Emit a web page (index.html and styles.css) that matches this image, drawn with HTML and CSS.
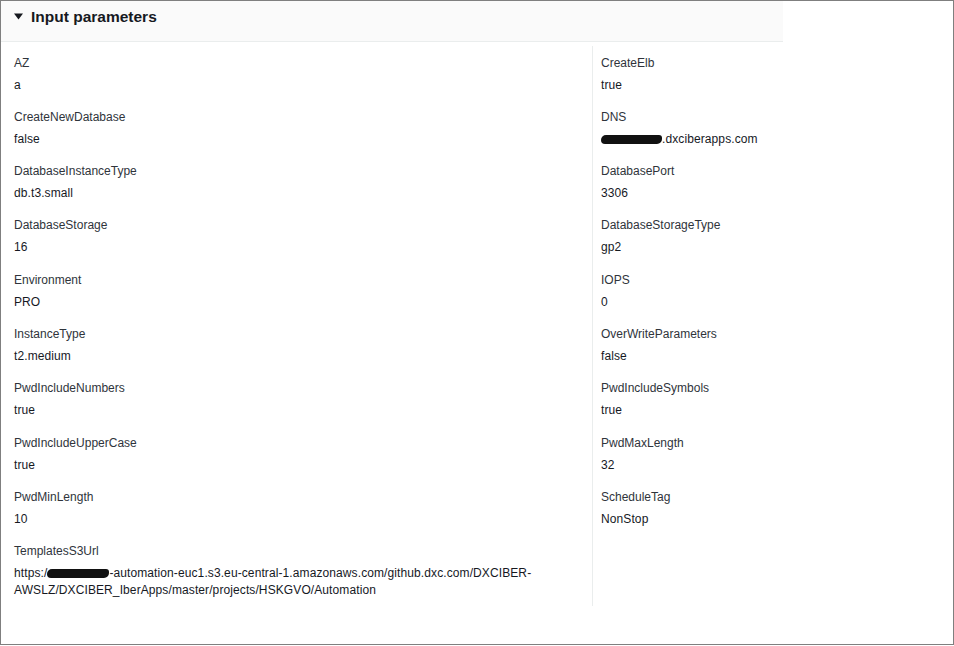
FILE: index.html
```html
<!DOCTYPE html>
<html>
<head>
<meta charset="utf-8">
<link rel="stylesheet" href="styles.css">
</head>
<body>
<div class="frame">
  <div class="panel">
    <div class="header">
      <svg class="caret" width="9" height="7" viewBox="0 0 9 7"><path d="M0 0.5 L9 0.5 L4.5 6.5 Z" fill="#16191f"/></svg>
      <h2 class="title">Input parameters</h2>
    </div>
    <div class="content">
      <div class="grid">
        <div class="col col-left">
          <div class="item"><div class="label">AZ</div><div class="value">a</div></div>
          <div class="item"><div class="label">CreateNewDatabase</div><div class="value">false</div></div>
          <div class="item"><div class="label">DatabaseInstanceType</div><div class="value">db.t3.small</div></div>
          <div class="item"><div class="label">DatabaseStorage</div><div class="value">16</div></div>
          <div class="item"><div class="label">Environment</div><div class="value">PRO</div></div>
          <div class="item"><div class="label">InstanceType</div><div class="value">t2.medium</div></div>
          <div class="item"><div class="label">PwdIncludeNumbers</div><div class="value">true</div></div>
          <div class="item"><div class="label">PwdIncludeUpperCase</div><div class="value">true</div></div>
          <div class="item"><div class="label">PwdMinLength</div><div class="value">10</div></div>
          <div class="item"><div class="label">TemplatesS3Url</div><div class="value">https:/<span class="redact redact-url"></span>-automation-euc1.s3.eu-central-1.amazonaws.com/github.dxc.com/DXCIBER-AWSLZ/DXCIBER_IberApps/master/projects/HSKGVO/Automation</div></div>
        </div>
        <div class="col col-right">
          <div class="item"><div class="label">CreateElb</div><div class="value">true</div></div>
          <div class="item"><div class="label">DNS</div><div class="value"><span class="redact redact-dns"></span>.dxciberapps.com</div></div>
          <div class="item"><div class="label">DatabasePort</div><div class="value">3306</div></div>
          <div class="item"><div class="label">DatabaseStorageType</div><div class="value">gp2</div></div>
          <div class="item"><div class="label">IOPS</div><div class="value">0</div></div>
          <div class="item"><div class="label">OverWriteParameters</div><div class="value">false</div></div>
          <div class="item"><div class="label">PwdIncludeSymbols</div><div class="value">true</div></div>
          <div class="item"><div class="label">PwdMaxLength</div><div class="value">32</div></div>
          <div class="item"><div class="label">ScheduleTag</div><div class="value">NonStop</div></div>
        </div>
      </div>
    </div>
  </div>
</div>
</body>
</html>
```
FILE: styles.css
```css
html, body {
  margin: 0;
  padding: 0;
  background: #ffffff;
}
body {
  font-family: "Liberation Sans", Arial, sans-serif;
  color: #16191f;
}
.frame {
  width: 954px;
  height: 645px;
  box-sizing: border-box;
  border: 1px solid #7f7f7f;
  overflow: hidden;
}
.panel {
  width: 782px;
}
.header {
  height: 40px;
  box-sizing: content-box;
  background: #fafafa;
  border-bottom: 1px solid #eaeded;
  display: flex;
  align-items: center;
  align-content: flex-start;
  padding: 0 0 0 13px;
  gap: 8px;
}
.header > * {
  align-self: flex-start;
}
.caret {
  display: block;
  margin-top: 12px;
}
.title {
  margin: 6px 0 0 0;
  font-size: 15.5px;
  font-weight: 700;
  color: #16191f;
  line-height: 20px;
}
.content {
  padding: 4px 0 0 13px;
}
.grid {
  display: grid;
  grid-template-columns: 578px 1fr;
}
.col {
  padding-top: 8.5px;
}
.col-left {
  padding-right: 10px;
}
.col-right {
  border-left: 1px solid #eaeded;
  padding-left: 8px;
}
.item {
  margin-bottom: 15.3px;
}
.col-left .item:last-child {
  margin-bottom: 7px;
}
.label {
  font-size: 12px;
  line-height: 17px;
  color: #2f343b;
  margin-bottom: 5px;
}
.value {
  font-size: 12px;
  line-height: 17px;
  color: #16191f;
  letter-spacing: 0.1px;
}
.redact {
  display: inline-block;
  height: 9px;
  background: #111;
  border-radius: 5px 3px 5px 4px;
  vertical-align: -1px;
}
.redact-url {
  width: 62px;
}
.redact-dns {
  width: 61px;
}
```
